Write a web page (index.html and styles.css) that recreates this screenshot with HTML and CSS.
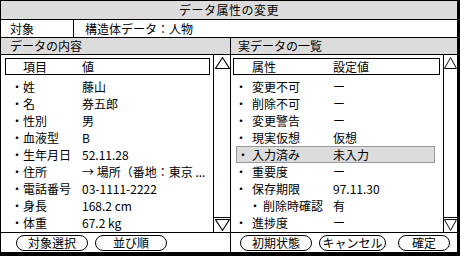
FILE: index.html
```html
<!DOCTYPE html>
<html lang="ja">
<head>
    <meta charset="UTF-8">
    <title>データ属性の変更</title>
    <link rel="stylesheet" href="styles.css">
</head>
<body>
    <div class="window">
        <div class="titlebar">データ属性の変更</div>

        <div class="target">
            <div class="target-label">対象</div>
            <div class="target-value">構造体データ：人物</div>
        </div>

        <div class="panes">
            <!-- left: data contents -->
            <div class="pane pane-left">
                <div class="pane-title">データの内容</div>
                <div class="pane-body">
                    <div class="list">
                        <div class="list-head"><span>項目</span><span>値</span></div>
                        <div class="row"><span>・</span><span>姓</span><span>藤山</span></div>
                        <div class="row"><span>・</span><span>名</span><span>券五郎</span></div>
                        <div class="row"><span>・</span><span>性別</span><span>男</span></div>
                        <div class="row"><span>・</span><span>血液型</span><span>B</span></div>
                        <div class="row"><span>・</span><span>生年月日</span><span>52.11.28</span></div>
                        <div class="row"><span>・</span><span>住所</span><span>→ 場所（番地：東京 ...</span></div>
                        <div class="row"><span>・</span><span>電話番号</span><span>03-1111-2222</span></div>
                        <div class="row"><span>・</span><span>身長</span><span>168.2 cm</span></div>
                        <div class="row"><span>・</span><span>体重</span><span>67.2 kg</span></div>
                    </div>
                    <div class="scrollbar">
                        <div class="arrow-up">
                            <svg viewBox="0 0 14 12" preserveAspectRatio="none"><polygon points="7,0.5 13.5,11.5 0.5,11.5" fill="#fff" stroke="#000" stroke-width="1"/></svg>
                        </div>
                        <div class="arrow-down">
                            <svg viewBox="0 0 14 12" preserveAspectRatio="none"><polygon points="0.5,0.5 13.5,0.5 7,11.5" fill="#fff" stroke="#000" stroke-width="1"/></svg>
                        </div>
                    </div>
                </div>
                <div class="buttons">
                    <button class="btn btn-wide">対象選択</button>
                    <button class="btn btn-wide">並び順</button>
                </div>
            </div>

            <!-- right: attribute list -->
            <div class="pane pane-right">
                <div class="pane-title">実データの一覧</div>
                <div class="pane-body">
                    <div class="list">
                        <div class="list-head"><span>属性</span><span>設定値</span></div>
                        <div class="row"><span>・</span><span>変更不可</span><span>ー</span></div>
                        <div class="row"><span>・</span><span>削除不可</span><span>ー</span></div>
                        <div class="row"><span>・</span><span>変更警告</span><span>ー</span></div>
                        <div class="row"><span>・</span><span>現実仮想</span><span>仮想</span></div>
                        <div class="row selected"><span>・</span><span>入力済み</span><span>未入力</span></div>
                        <div class="row"><span>・</span><span>重要度</span><span>ー</span></div>
                        <div class="row"><span>・</span><span>保存期限</span><span>97.11.30</span></div>
                        <div class="row sub"><span>・</span><span>削除時確認</span><span>有</span></div>
                        <div class="row"><span>・</span><span>進捗度</span><span>ー</span></div>
                    </div>
                    <div class="scrollbar">
                        <div class="arrow-up">
                            <svg viewBox="0 0 14 12" preserveAspectRatio="none"><polygon points="7,0.5 13.5,11.5 0.5,11.5" fill="#fff" stroke="#000" stroke-width="1"/></svg>
                        </div>
                        <div class="arrow-down">
                            <svg viewBox="0 0 14 12" preserveAspectRatio="none"><polygon points="0.5,0.5 13.5,0.5 7,11.5" fill="#fff" stroke="#000" stroke-width="1"/></svg>
                        </div>
                    </div>
                </div>
                <div class="buttons">
                    <button class="btn btn-wide">初期状態</button>
                    <button class="btn btn-mid">キャンセル</button>
                    <button class="btn btn-ok">確定</button>
                </div>
            </div>
        </div>
    </div>
</body>
</html>
```

FILE: styles.css
```css
/* Dialog window */
body {
    margin: 0;
    background: #fff;
    font-family: "Noto Sans CJK JP", "Noto Sans", sans-serif;
    font-size: 12px;
    color: #000;
}

.window {
    box-sizing: border-box;
    width: 460px;
    height: 256px;
    border: solid #000;
    border-width: 1px 3px 4px 1px;
    display: flex;
    flex-direction: column;
}

.titlebar {
    height: 18px;
    line-height: 18px;
    background: #dcdcdc;
    border-bottom: 1px solid #000;
    text-align: center;
    letter-spacing: 0.5px;
}

/* target row */
.target {
    display: flex;
    height: 17px;
    line-height: 17px;
    border-bottom: 1px solid #000;
}

.target-label {
    width: 63px;
    padding-left: 9px;
    border-right: 1px solid #000;
}

.target-value {
    padding-left: 11px;
}

/* two panes */
.panes {
    flex: 1;
    display: flex;
}

.pane {
    display: flex;
    flex-direction: column;
}

.pane-left {
    width: 229px;
    border-right: 1px solid #000;
}

.pane-right {
    flex: 1;
}

.pane-title {
    height: 16px;
    line-height: 16px;
    background: #dcdcdc;
    border-bottom: 1px solid #000;
    padding-left: 9px;
}

.pane-right .pane-title {
    padding-left: 7px;
}

.pane-body {
    height: 177px;
    border-bottom: 1px solid #000;
    display: flex;
}

.list {
    flex: 1;
}

.list-head,
.row {
    display: grid;
    grid-template-columns: var(--dot) var(--key) 1fr;
    white-space: nowrap;
}

.pane-left .list {
    --dot: 12px;
    --key: 59px;
}

.pane-right .list {
    --dot: 17px;
    --key: 81px;
}

.list-head {
    box-sizing: border-box;
    height: 17px;
    line-height: 15px;
    border: 1px solid #000;
    margin: 3px 3px 3px 4px;
    grid-template-columns: var(--key) 1fr;
    padding-left: 17px;
}

.pane-right .list-head {
    margin-left: 2px;
    padding-left: 18px;
}

.row {
    box-sizing: border-box;
    height: 17px;
    line-height: 17px;
    padding-left: 10px;
}

.pane-right .row {
    padding-left: 4px;
}

.pane-right .row.sub {
    --dot: 14px;
    --key: 70px;
    padding-left: 18px;
}

.pane-right .row.selected {
    --dot: 15px;
    margin: 0 8px 0 5px;
    padding-left: 0;
    line-height: 15px;
    background: #dcdcdc;
    border: 1px solid #999;
}

/* scrollbars */
.scrollbar {
    width: 16px;
    border-left: 1px solid #000;
    display: flex;
    flex-direction: column;
    justify-content: space-between;
}

.pane-right .scrollbar {
    width: 13px;
}

.scrollbar svg {
    display: block;
    width: 100%;
    height: 12px;
}

.arrow-up {
    padding: 2px 0 0 1px;
}

.pane-right .arrow-up {
    padding-left: 0;
}

.arrow-down {
    height: 15px;
    border-top: 1px solid #000;
    padding: 1px 0 0 1px;
    box-sizing: border-box;
}

.pane-right .arrow-down {
    padding-left: 0;
}

/* buttons */
.buttons {
    display: flex;
    gap: 7px;
    padding: 2px 0 0 15px;
}

.pane-right .buttons {
    padding-left: 9px;
}

.btn {
    box-sizing: border-box;
    height: 16px;
    padding: 0;
    border: 1px solid #000;
    border-radius: 8px;
    background: #fff;
    font-family: inherit;
    font-size: 12px;
    line-height: 14px;
    color: #000;
}

.btn-wide {
    width: 72px;
}

.btn-mid {
    width: 67px;
}

.btn-ok {
    width: 52px;
    margin-left: 5px;
}
```
